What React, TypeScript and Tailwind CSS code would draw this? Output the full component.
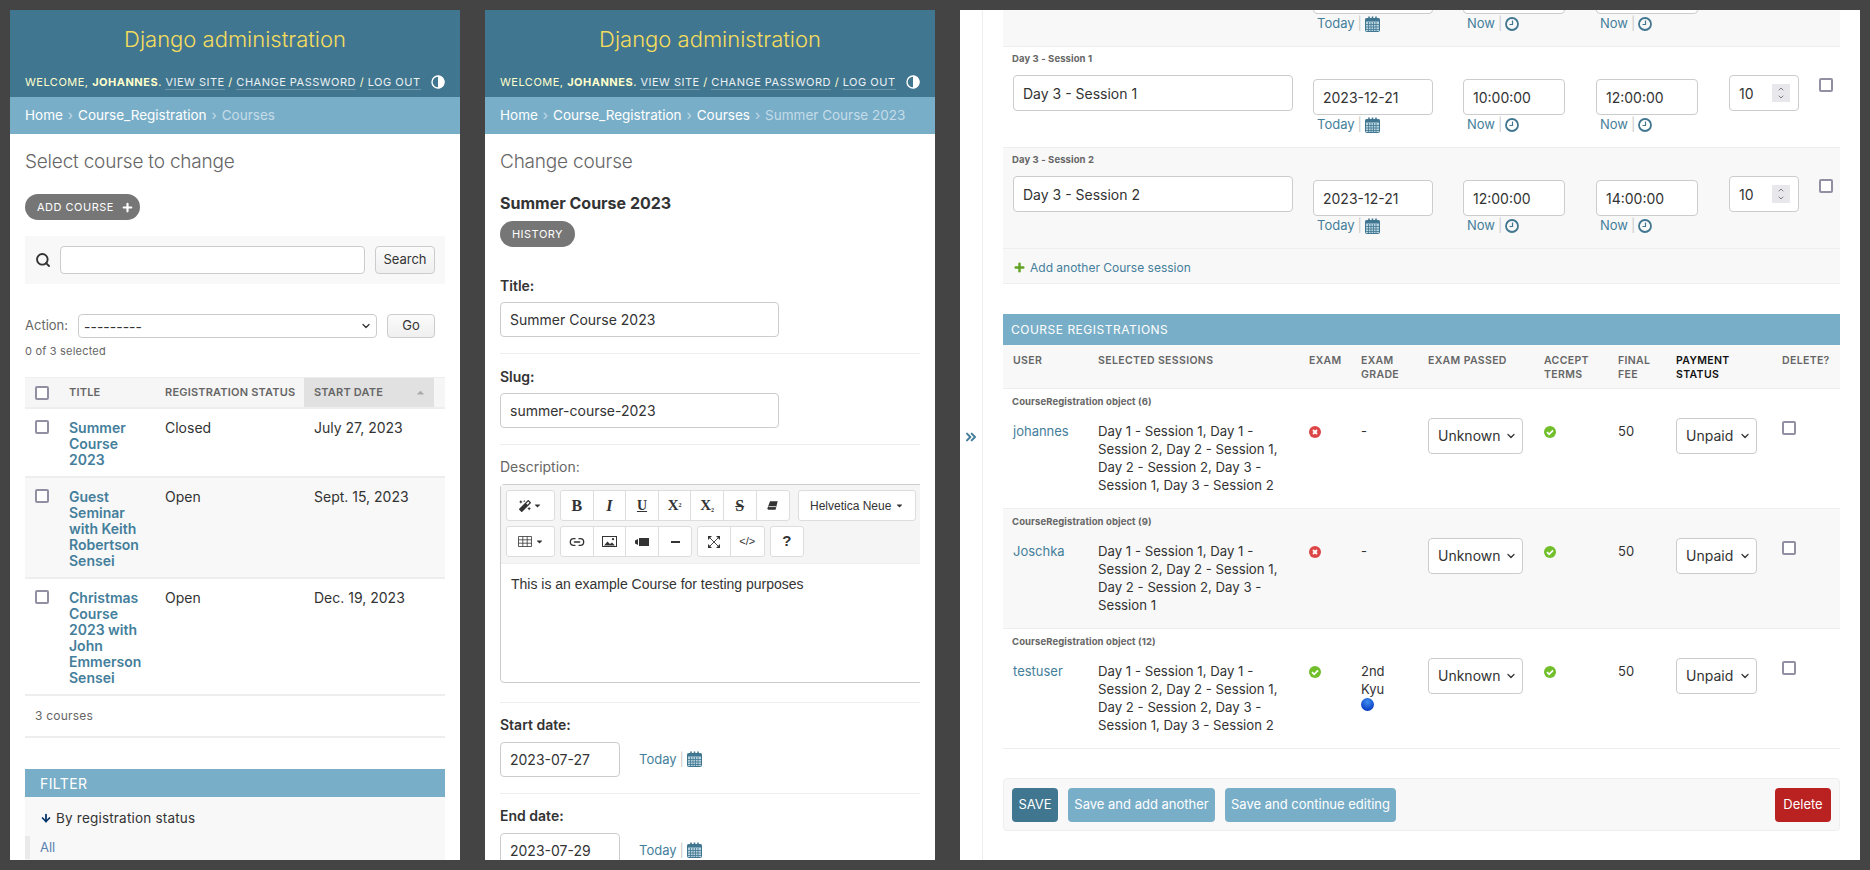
import React from 'react';
import { ChevronDown, ChevronUp, ChevronsRight, Link2, Plus, ArrowDown, Search } from 'lucide-react';
import { FaMagic, FaCaretDown, FaCaretUp } from 'react-icons/fa';

function CalendarIcon() {
  return (
    <svg width="15" height="16" viewBox="0 0 15 16" className="shrink-0 -mt-[1px]">
      <rect x="0.5" y="2.5" width="14" height="13" rx="1" fill="#b7d3e0" stroke="#417690" />
      <rect x="0.5" y="2.5" width="14" height="3" fill="#417690" />
      <path d="M4 0.5v3M7.5 0.5v3M11 0.5v3" stroke="#417690" strokeWidth="1.6" />
      <path d="M1 8.5h13M1 11h13M1 13.5h13M3.5 6v9M6 6v9M8.5 6v9M11 6v9" stroke="#417690" strokeWidth="0.8" />
    </svg>
  );
}

function ClockIcon() {
  return (
    <svg width="14" height="14" viewBox="0 0 14 14" className="shrink-0">
      <circle cx="7" cy="7" r="6" fill="none" stroke="#417690" strokeWidth="1.8" />
      <path d="M7.5 3.5v4H4.5" fill="none" stroke="#417690" strokeWidth="1.2" />
    </svg>
  );
}

function YesIcon() {
  return (
    <svg width="12" height="12" viewBox="0 0 12 12">
      <circle cx="6" cy="6" r="6" fill="#70bf2b" />
      <path d="M3 6.2l2.2 2.2L9 4.4" fill="none" stroke="#fff" strokeWidth="1.7" />
    </svg>
  );
}

function NoIcon() {
  return (
    <svg width="12" height="12" viewBox="0 0 12 12">
      <circle cx="6" cy="6" r="6" fill="#dd4646" />
      <path d="M4 4l4 4M8 4l-4 4" fill="none" stroke="#fff" strokeWidth="1.8" />
    </svg>
  );
}

function ThemeIcon() {
  return (
    <svg width="14" height="14" viewBox="0 0 14 14">
      <circle cx="7" cy="7" r="6" fill="none" stroke="#fff" strokeWidth="1.4" />
      <path d="M7 0.5a6.5 6.5 0 0 1 0 13z" fill="#fff" />
    </svg>
  );
}

function Checkbox() {
  return <span className="block w-[14px] h-[14px] rounded-[2px] border-2 border-[#928fa3] bg-white" />;
}

function Field({ children, className }: { children?: React.ReactNode; className: string }) {
  return (
    <div className={`flex items-center bg-white border border-[#ccc] rounded-[4px] text-[#333] text-[14px] ${className}`}>
      {children}
    </div>
  );
}

function Select({ value, className }: { value: string; className: string }) {
  return (
    <Field className={`h-[36px] pl-[9px] pr-[5px] justify-between ${className}`}>
      <span>{value}</span>
      <ChevronDown size={12} strokeWidth={2.5} color="#333" />
    </Field>
  );
}

function Header({ crumbs, current }: { crumbs: string[]; current: string }) {
  return (
    <>
      <div className="h-[87px] bg-[#417690] pt-[14px]">
        <div className="text-center text-[22px] leading-[30px] font-light text-[#f5dd5d]">Django administration</div>
        <div className="mt-[20px] px-[15px] flex items-center justify-between text-[11px] leading-[16px] tracking-[0.5px] uppercase text-[#ffc] whitespace-nowrap">
          <div>
            Welcome, <strong className="font-bold">Johannes</strong>.{' '}
            <span className="border-b border-[#6f97ab] text-white/90">View site</span> /{' '}
            <span className="border-b border-[#6f97ab] text-white/90">Change password</span> /{' '}
            <span className="border-b border-[#6f97ab] text-white/90">Log out</span>
          </div>
          <ThemeIcon />
        </div>
      </div>
      <div className="h-[37px] bg-[#79aec8] px-[15px] flex items-center text-[13.5px] text-white whitespace-nowrap">
        {crumbs.map((c) => (
          <React.Fragment key={c}>
            <span>{c}</span>
            <span className="mx-[5px] text-[#c4dce8]">›</span>
          </React.Fragment>
        ))}
        <span className="text-[#c4dce8]">{current}</span>
      </div>
    </>
  );
}

const courses = [
  { title: 'Summer Course 2023', status: 'Closed', date: 'July 27, 2023', height: 'h-[69px] bg-white' },
  { title: 'Guest Seminar with Keith Robertson Sensei', status: 'Open', date: 'Sept. 15, 2023', height: 'h-[101px] bg-[#f8f8f8]' },
  { title: 'Christmas Course 2023 with John Emmerson Sensei', status: 'Open', date: 'Dec. 19, 2023', height: 'h-[117px] bg-white' },
];

function CourseList() {
  return (
    <div className="w-[450px] h-[850px] shrink-0 bg-white overflow-hidden">
      <Header crumbs={['Home', 'Course_Registration']} current="Courses" />
      <div className="px-[15px] pt-[14px]">
        <h1 className="text-[19px] leading-[28px] font-light tracking-[-0.2px] text-[#666]">Select course to change</h1>
        <div className="mt-[18px] w-[115px] h-[26px] rounded-full bg-[#767676] flex items-center pl-[12px] gap-[7px] text-[11px] tracking-[0.5px] text-white">
          ADD COURSE
          <Plus size={13} strokeWidth={4} />
        </div>
        <div className="mt-[16px] h-[48px] bg-[#f8f8f8] flex items-center pl-[10px] pr-[10px]">
          <Search size={16} strokeWidth={2.8} color="#333" className="mr-[9px]" />
          <Field className="w-[305px] h-[28px]" />
          <div className="ml-[10px] w-[60px] h-[28px] rounded-[4px] border border-[#ccc] bg-gradient-to-b from-[#fbfbfb] to-[#efefef] flex items-center justify-center text-[13px] text-[#333]">
            Search
          </div>
        </div>
        <div className="mt-[30px] flex items-center h-[24px] text-[13px] text-[#666]">
          <span className="w-[53px]">Action:</span>
          <Field className="w-[299px] h-[24px] pl-[5px] pr-[4px] justify-between text-[13px]">
            <span>---------</span>
            <ChevronDown size={12} strokeWidth={2.5} color="#333" />
          </Field>
          <div className="ml-[10px] w-[48px] h-[24px] rounded-[4px] border border-[#ccc] bg-gradient-to-b from-[#fbfbfb] to-[#efefef] flex items-center justify-center text-[13px] text-[#333]">
            Go
          </div>
        </div>
        <div className="mt-[5px] text-[11px] leading-[16px] tracking-[0.2px] text-[#666]">0 of 3 selected</div>

        <div className="mt-[18px] w-[420px] grid grid-cols-[34px_96px_149px_130px_11px] h-[32px] bg-[#f6f6f6] border-t border-[#eee] border-b-2 border-b-[#eee] items-center text-[11px] font-semibold text-[#666] tracking-[0.2px]">
          <div className="pl-[10px]"><Checkbox /></div>
          <div className="pl-[10px]">TITLE</div>
          <div className="pl-[10px]">REGISTRATION STATUS</div>
          <div className="pl-[10px] h-full bg-[#e1e1e1] flex items-center justify-between pr-[8px]">
            START DATE
            <FaCaretUp size={11} color="#aaa" />
          </div>
          <div />
        </div>
        {courses.map((c) => (
          <div key={c.title} className={`w-[420px] grid grid-cols-[34px_96px_149px_130px_11px] border-b-2 border-[#eee] pt-[11px] text-[14px] leading-[16px] text-[#333] ${c.height}`}>
            <div className="pl-[10px]"><Checkbox /></div>
            <div className="pl-[10px] pr-[8px] font-semibold text-[#447e9b]">{c.title}</div>
            <div className="pl-[10px]">{c.status}</div>
            <div className="pl-[10px]">{c.date}</div>
            <div />
          </div>
        ))}
        <div className="w-[420px] h-[42px] border-b-2 border-[#eee] flex items-center pl-[10px] text-[12px] tracking-[0.2px] text-[#666]">3 courses</div>

        <div className="mt-[31px] w-[420px]">
          <div className="h-[28px] bg-[#79aec8] flex items-center pl-[15px] text-[14px] tracking-[0.4px] text-white">FILTER</div>
          <div className="h-[200px] bg-[#f8f8f8] pt-[13px]">
            <div className="flex items-center pl-[15px] gap-[4px] text-[13.5px] leading-[16px] tracking-[0.2px] text-[#333]">
              <ArrowDown size={12} strokeWidth={3.5} color="#003366" />
              By registration status
            </div>
            <div className="mt-[10px] border-l-[5px] border-[#eaeaea] h-[23px] pl-[10px] flex items-center text-[13px] text-[#5b80b2]">All</div>
          </div>
        </div>
      </div>
    </div>
  );
}

function ToolButton({ children, w = 'w-[32.6px]' }: { children: React.ReactNode; w?: string }) {
  return <div className={`${w} h-full flex items-center justify-center text-[#333]`}>{children}</div>;
}

function ToolGroup({ children }: { children: React.ReactNode }) {
  return (
    <div className="flex h-full bg-white border border-[#ddd] rounded-[3px] divide-x divide-[#ddd] shrink-0">{children}</div>
  );
}

function TableIcon() {
  return (
    <svg width="14" height="11" viewBox="0 0 14 11">
      <path d="M0.5 0.5h13v10h-13zM0.5 3.8h13M0.5 7.2h13M4.8 0.5v10M9.2 0.5v10" fill="none" stroke="#333" strokeWidth="0.8" />
    </svg>
  );
}

function ImageIcon() {
  return (
    <svg width="15" height="11" viewBox="0 0 15 11">
      <rect x="0.5" y="0.5" width="14" height="10" fill="none" stroke="#333" />
      <path d="M2 9.5l3.5-4 2.5 2.5 2-1.5 3 3z" fill="#333" />
      <circle cx="11" cy="3.2" r="1.1" fill="#333" />
    </svg>
  );
}

function VideoIcon() {
  return (
    <svg width="14" height="8" viewBox="0 0 14 8">
      <rect x="4" y="0" width="10" height="8" fill="#333" />
      <path d="M0 2.5L3 1v6L0 5.5z" fill="#333" />
    </svg>
  );
}

function ExpandIcon() {
  return (
    <svg width="12" height="12" viewBox="0 0 12 12">
      <path d="M1.5 1.5l9 9M10.5 1.5l-9 9" stroke="#333" strokeWidth="0.9" />
      <path d="M0 0h4L0 4zM12 0H8l4 4zM0 12h4L0 8zM12 12H8l4-4z" fill="#333" />
    </svg>
  );
}

function EraserIcon() {
  return (
    <svg width="11" height="9" viewBox="0 0 11 9">
      <path d="M3 0.3h7.7L8.6 8.7H1.2L0.4 7.6z" fill="#333" />
      <path d="M1.6 5.6h7.6" stroke="#fff" strokeWidth="0.8" />
    </svg>
  );
}

function Editor() {
  return (
    <div className="mt-[9px] w-[460px] h-[199px] border border-[#ccc] rounded-[4px]">
      <div className="h-[79px] bg-[#f5f5f5] border-b border-[#eee] pl-[5px] pt-[5px] flex flex-col gap-[5px] font-['Liberation_Sans',sans-serif]">
        <div className="flex h-[31px] gap-[5px]">
          <ToolGroup>
            <ToolButton w="w-[47px]"><FaMagic size={12} /><FaCaretDown size={9} className="ml-[2px]" /></ToolButton>
          </ToolGroup>
          <ToolGroup>
            <ToolButton><span className="font-['Liberation_Serif',serif] font-bold text-[16px]">B</span></ToolButton>
            <ToolButton><span className="font-['Liberation_Serif',serif] font-bold italic text-[16px]">I</span></ToolButton>
            <ToolButton><span className="font-['Liberation_Serif',serif] font-bold underline text-[14px]">U</span></ToolButton>
            <ToolButton><span className="font-['Liberation_Serif',serif] font-bold text-[15px]">X<sup className="text-[6px]">2</sup></span></ToolButton>
            <ToolButton><span className="font-['Liberation_Serif',serif] font-bold text-[15px]">X<sub className="text-[6px]">2</sub></span></ToolButton>
            <ToolButton><span className="font-['Liberation_Serif',serif] font-bold line-through text-[16px]">S</span></ToolButton>
            <ToolButton><EraserIcon /></ToolButton>
          </ToolGroup>
          <div className="ml-[3px] h-full">
            <ToolGroup>
              <ToolButton w="w-[116px]"><span className="text-[12px]">Helvetica Neue</span><FaCaretDown size={9} className="ml-[4px]" /></ToolButton>
            </ToolGroup>
          </div>
        </div>
        <div className="flex h-[31px] gap-[5px]">
          <ToolGroup>
            <ToolButton w="w-[47px]"><TableIcon /><FaCaretDown size={9} className="ml-[3px]" /></ToolButton>
          </ToolGroup>
          <ToolGroup>
            <ToolButton><Link2 size={16} strokeWidth={2} /></ToolButton>
            <ToolButton><ImageIcon /></ToolButton>
            <ToolButton><VideoIcon /></ToolButton>
            <ToolButton><span className="block w-[9px] h-[2px] bg-[#333]" /></ToolButton>
          </ToolGroup>
          <ToolGroup>
            <ToolButton><ExpandIcon /></ToolButton>
            <ToolButton><span className="text-[11px]">&lt;/&gt;</span></ToolButton>
          </ToolGroup>
          <ToolGroup>
            <ToolButton><span className="font-bold text-[15px]">?</span></ToolButton>
          </ToolGroup>
        </div>
      </div>
      <div className="pl-[10px] pt-[11px] text-[14px] leading-[18px] text-[#333] font-['Liberation_Sans',sans-serif]">
        This is an example Course for testing purposes
      </div>
    </div>
  );
}

function DateRow({ label, value }: { label: string; value: string }) {
  return (
    <div className="pt-[14px] pb-[16px] border-b border-[#eee]">
      <div className="text-[14px] leading-[16px] font-semibold text-[#333]">{label}</div>
      <div className="mt-[9px] flex items-center">
        <Field className="w-[120px] h-[35px] pl-[9px]">{value}</Field>
        <div className="ml-[19px] flex items-center text-[13px] text-[#447e9b]">
          Today<span className="mx-[3px] text-[#ccc]">|</span><CalendarIcon />
        </div>
      </div>
    </div>
  );
}

function ChangeForm() {
  return (
    <div className="w-[450px] h-[850px] shrink-0 bg-white overflow-hidden">
      <Header crumbs={['Home', 'Course_Registration', 'Courses']} current="Summer Course 2023" />
      <div className="pl-[15px] pr-[15px] pt-[14px]">
        <h1 className="text-[19px] leading-[28px] font-light tracking-[-0.2px] text-[#666]">Change course</h1>
        <h2 className="mt-[17px] text-[16px] leading-[20px] font-bold text-[#333]">Summer Course 2023</h2>
        <div className="mt-[8px] w-[75px] h-[26px] rounded-full bg-[#767676] flex items-center justify-center text-[11px] tracking-[0.5px] text-white">HISTORY</div>
        <div className="pt-[31px] pb-[16px] border-b border-[#eee]">
          <div className="text-[14px] leading-[16px] font-semibold text-[#333]">Title:</div>
          <Field className="mt-[8px] w-[279px] h-[35px] pl-[9px]">Summer Course 2023</Field>
        </div>
        <div className="pt-[15px] pb-[16px] border-b border-[#eee]">
          <div className="text-[14px] leading-[16px] font-semibold text-[#333]">Slug:</div>
          <Field className="mt-[8px] w-[279px] h-[35px] pl-[9px]">summer-course-2023</Field>
        </div>
        <div className="pt-[14px] pb-[19px] border-b border-[#eee] overflow-hidden">
          <div className="text-[14px] leading-[16px] text-[#666]">Description:</div>
          <Editor />
        </div>
        <DateRow label="Start date:" value="2023-07-27" />
        <DateRow label="End date:" value="2023-07-29" />
      </div>
    </div>
  );
}

function Shortcut({ label, icon }: { label: string; icon: React.ReactNode }) {
  return (
    <div className="mt-[2px] ml-[4px] h-[16px] flex items-center text-[13px] text-[#447e9b]">
      {label}<span className="mx-[3px] text-[#ccc]">|</span>{icon}
    </div>
  );
}

// the first row is scrolled almost out of view, only its shortcuts show
const sessions = [
  { name: '', start: '', end: '', date: '', qty: '', bg: 'bg-[#f8f8f8]' },
  { name: 'Day 3 - Session 1', start: '10:00:00', end: '12:00:00', date: '2023-12-21', qty: '10', bg: 'bg-white' },
  { name: 'Day 3 - Session 2', start: '12:00:00', end: '14:00:00', date: '2023-12-21', qty: '10', bg: 'bg-[#f8f8f8]' },
];

function SessionRow({ s }: { s: (typeof sessions)[number] }) {
  return (
    <div className={`h-[101px] border-b border-[#eee] ${s.bg}`}>
      <div className="h-[28px] pl-[9px] pt-[6px] text-[9.5px] leading-[12px] font-bold tracking-[0.1px] text-[#666]">{s.name}</div>
      <div className="grid grid-cols-[300px_150px_133px_133px_90px_31px]">
        <div className="pl-[10px]"><Field className="w-[280px] h-[36px] pl-[9px] text-[13.5px]">{s.name}</Field></div>
        <div className="pl-[10px] pt-[4px]">
          <Field className="w-[120px] h-[36px] pl-[9px] text-[14.5px]">{s.date}</Field>
          <Shortcut label="Today" icon={<CalendarIcon />} />
        </div>
        <div className="pl-[10px] pt-[4px]">
          <Field className="w-[102px] h-[36px] pl-[9px] text-[14.5px]">{s.start}</Field>
          <Shortcut label="Now" icon={<ClockIcon />} />
        </div>
        <div className="pl-[10px] pt-[4px]">
          <Field className="w-[102px] h-[36px] pl-[9px] text-[14.5px]">{s.end}</Field>
          <Shortcut label="Now" icon={<ClockIcon />} />
        </div>
        <div className="pl-[10px]">
          <Field className="w-[70px] h-[36px] pl-[9px] pr-[8px] justify-between">
            {s.qty}
            <span className="w-[18px] h-[18px] bg-[#e8e8ec] flex flex-col items-center justify-center text-[#666]">
              <ChevronUp size={8} strokeWidth={2.5} />
              <ChevronDown size={8} strokeWidth={2.5} />
            </span>
          </Field>
        </div>
        <div className="pl-[10px] pt-[3px]"><Checkbox /></div>
      </div>
    </div>
  );
}

const regCols = 'grid grid-cols-[85px_211px_52px_67px_116px_74px_58px_106px_68px]';

const registrations = [
  {
    id: 6, user: 'johannes', exam: false, bg: 'bg-white',
    sessions: 'Day 1 - Session 1, Day 1 - Session 2, Day 2 - Session 1, Day 2 - Session 2, Day 3 - Session 1, Day 3 - Session 2',
  },
  {
    id: 9, user: 'Joschka', exam: false, bg: 'bg-[#f8f8f8]',
    sessions: 'Day 1 - Session 1, Day 1 - Session 2, Day 2 - Session 1, Day 2 - Session 2, Day 3 - Session 1',
  },
  {
    id: 12, user: 'testuser', exam: true, bg: 'bg-white',
    sessions: 'Day 1 - Session 1, Day 1 - Session 2, Day 2 - Session 1, Day 2 - Session 2, Day 3 - Session 1, Day 3 - Session 2',
  },
];

function Registrations() {
  return (
    <div className="mt-[30px]">
      <div className="h-[31px] bg-[#79aec8] flex items-center pl-[8px] text-[12px] tracking-[0.5px] text-white">COURSE REGISTRATIONS</div>
      <div className={`${regCols} h-[44px] pt-[9px] bg-[#f8f8f8] border-b border-[#eee] text-[10.5px] leading-[14px] font-semibold text-[#666] tracking-[0.35px]`}>
        <div className="pl-[10px]">USER</div>
        <div className="pl-[10px]">SELECTED SESSIONS</div>
        <div className="pl-[10px]">EXAM</div>
        <div className="pl-[10px]">EXAM GRADE</div>
        <div className="pl-[10px]">EXAM PASSED</div>
        <div className="pl-[10px]">ACCEPT TERMS</div>
        <div className="pl-[10px]">FINAL FEE</div>
        <div className="pl-[10px] text-[#111]">PAYMENT STATUS</div>
        <div className="pl-[10px]">DELETE?</div>
      </div>
      {registrations.map((r) => (
        <div key={r.id} className={`h-[120px] border-b border-[#eee] ${r.bg}`}>
          <div className="h-[29px] pl-[9px] pt-[7px] text-[9.5px] leading-[12px] font-bold tracking-[0.1px] text-[#666]">
            CourseRegistration object ({r.id})
          </div>
          <div className={`${regCols} text-[13px] leading-[18px] text-[#333]`}>
            <div className="pl-[10px] pt-[4px] text-[#447e9b]">{r.user}</div>
            <div className="pl-[10px] pr-[10px] pt-[4px] text-[13.2px]">{r.sessions}</div>
            <div className="pl-[10px] pt-[8px]">{r.exam ? <YesIcon /> : <NoIcon />}</div>
            <div className="pl-[10px] pr-[10px] pt-[4px]">
              {r.exam ? (
                <>
                  2nd Kyu
                  <span className="block w-[13px] h-[13px] rounded-full bg-[radial-gradient(circle_at_50%_30%,#3f8df0,#0a3fc4_75%)]" />
                </>
              ) : (
                '-'
              )}
            </div>
            <div className="pl-[10px]"><Select value="Unknown" className="w-[95px]" /></div>
            <div className="pl-[10px] pt-[8px]"><YesIcon /></div>
            <div className="pl-[10px] pt-[4px]">50</div>
            <div className="pl-[10px]"><Select value="Unpaid" className="w-[81px]" /></div>
            <div className="pl-[10px] pt-[3px]"><Checkbox /></div>
          </div>
        </div>
      ))}
    </div>
  );
}

function SessionsPanel() {
  return (
    <div className="w-[900px] h-[850px] shrink-0 bg-white overflow-hidden flex">
      <div className="w-[23px] shrink-0 border-r border-[#eee] flex items-center justify-center">
        <ChevronsRight size={16} strokeWidth={3} color="#447e9b" className="mt-[4px]" />
      </div>
      <div className="ml-[20px] w-[837px]">
        <div className="-mt-[64px]">
          {sessions.map((s, i) => (
            <SessionRow key={i} s={s} />
          ))}
          <div className="h-[35px] bg-[#f8f8f8] border-b border-[#eee] flex items-center pl-[10px] pt-[3px] gap-[4px] text-[12px] text-[#447e9b]">
            <Plus size={13} strokeWidth={4.5} color="#5fa225" />
            Add another Course session
          </div>
          <Registrations />
          <div className="mt-[29px] h-[53px] bg-[#f8f8f8] border border-[#eee] rounded-[4px] flex items-center pl-[8px] pr-[8px] gap-[10px] text-[13px] text-white">
            <div className="w-[46px] h-[34px] bg-[#417690] rounded-[4px] flex items-center justify-center">SAVE</div>
            <div className="w-[147px] h-[34px] bg-[#79aec8] rounded-[4px] flex items-center justify-center">Save and add another</div>
            <div className="w-[171px] h-[34px] bg-[#79aec8] rounded-[4px] flex items-center justify-center">Save and continue editing</div>
            <div className="ml-auto w-[56px] h-[34px] bg-[#ba2121] rounded-[4px] flex items-center justify-center">Delete</div>
          </div>
        </div>
      </div>
    </div>
  );
}

export default function App() {
  return (
    <div className="w-[1870px] h-[870px] overflow-hidden bg-[#444] p-[10px] flex gap-[25px] font-['Inter',sans-serif]">
      <CourseList />
      <ChangeForm />
      <SessionsPanel />
    </div>
  );
}
